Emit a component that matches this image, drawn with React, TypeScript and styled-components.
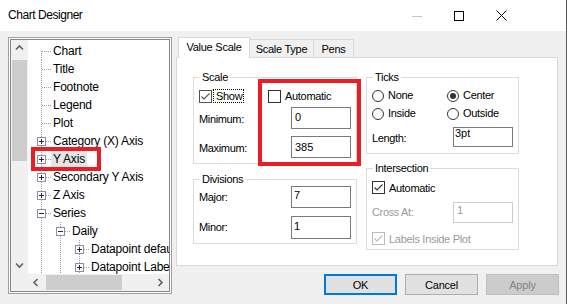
import React from "react";
import styled, { createGlobalStyle } from "styled-components";

const GlobalStyle = createGlobalStyle`
  html, body { margin: 0; padding: 0; background: #f0f0f0; }
  body { font-family: "Liberation Sans", Arial, sans-serif; color: #000; }
  * { box-sizing: border-box; }
`;

const Window = styled.div`
  position: relative;
  width: 567px;
  height: 304px;
  background: #f0f0f0;
  border-right: 1px solid #5a5a5a;
  display: flex;
  flex-direction: column;
  overflow: hidden;
`;

const TitleBar = styled.div`
  height: 31px;
  flex-shrink: 0;
  background: #fff;
  display: flex;
  align-items: center;
  padding: 0 44px 0 8px;
`;

const Caption = styled.div`
  flex: 1;
  font-size: 12px;
  letter-spacing: -0.45px;
  padding-bottom: 1px;
`;

const CaptionButton = styled.div`
  width: 42px;
  height: 31px;
  display: flex;
  align-items: center;
  justify-content: center;
`;

const Body = styled.div`
  display: flex;
  gap: 4px;
  padding: 6px 0 0 8px;
`;

/* ---------- tree ---------- */

const TreeFrame = styled.div`
  width: 164px;
  height: 257px;
  border: 1px solid #a0a0a0;
  padding: 1px;
  background: #fff;
`;

const TreeInner = styled.div`
  height: 100%;
  border: 1px solid #828790;
  display: grid;
  grid-template-columns: 17px 1fr;
  grid-template-rows: 1fr 17px;
  background: #fff;
`;

const VScroll = styled.div`
  background: #f0f0f0;
  display: flex;
  flex-direction: column;
  align-items: center;
`;

const HScroll = styled.div`
  background: #f0f0f0;
  display: flex;
  align-items: center;
`;

const Corner = styled.div`
  background: #f0f0f0;
`;

const ArrowButton = styled.div`
  width: 17px;
  height: 17px;
  flex-shrink: 0;
  display: flex;
  align-items: center;
  justify-content: center;
`;

const Track = styled.div<{ $vertical?: boolean }>`
  flex: 1;
  align-self: stretch;
  display: flex;
  flex-direction: ${(p) => (p.$vertical ? "column" : "row")};
  align-items: center;
`;

const Thumb = styled.div<{ $vertical?: boolean; $len: number; $start: number }>`
  background: #cdcdcd;
  ${(p) =>
    p.$vertical
      ? `width: 15px; height: ${p.$len}px; margin-top: ${p.$start}px;`
      : `height: 15px; width: ${p.$len}px; margin-left: ${p.$start}px;`}
`;

const TreeContent = styled.div`
  overflow: hidden;
  padding-top: 2px;
  background: #fff;
`;

const TreeRow = styled.div`
  height: 18px;
  display: flex;
  align-items: center;
  white-space: nowrap;
`;

const TreeLabel = styled.span<{ $selected?: boolean }>`
  font-size: 12px;
  letter-spacing: -0.2px;
  line-height: 16px;
  height: 16px;
  padding: 0 2px;
  background: ${(p) => (p.$selected ? "#e5e5e5" : "transparent")};
`;

type Item = { label: string; level: number; exp?: "+" | "-"; first?: boolean; selected?: boolean };

const treeItems: Item[] = [
  { label: "Chart", level: 0, first: true },
  { label: "Title", level: 0 },
  { label: "Footnote", level: 0 },
  { label: "Legend", level: 0 },
  { label: "Plot", level: 0 },
  { label: "Category (X) Axis", level: 0, exp: "+" },
  { label: "Y Axis", level: 0, exp: "+", selected: true },
  { label: "Secondary Y Axis", level: 0, exp: "+" },
  { label: "Z Axis", level: 0, exp: "+" },
  { label: "Series", level: 0, exp: "-" },
  { label: "Daily", level: 1, exp: "-" },
  { label: "Datapoint defaults", level: 2, exp: "+" },
  { label: "Datapoint Labels", level: 2, exp: "+" },
];

function TreeGlyph({ level, exp, first }: { level: number; exp?: "+" | "-"; first?: boolean }) {
  const w = 23 + 19 * level;
  const X = 13 + 19 * level;
  const dot = { stroke: "#a0a0a0", strokeDasharray: "1 1", strokeWidth: 1 };
  const guides = [];
  for (let k = 0; k < level; k++) {
    const x = 13 + 19 * k + 0.5;
    guides.push(<line key={k} x1={x} y1={0} x2={x} y2={18} {...dot} />);
  }
  return (
    <svg width={w} height={18} shapeRendering="crispEdges" style={{ flexShrink: 0 }}>
      {guides}
      <line x1={X + 0.5} y1={first ? 9 : 0} x2={X + 0.5} y2={18} {...dot} />
      <line x1={X + 1} y1={9.5} x2={X + 11} y2={9.5} {...dot} />
      {exp && (
        <g>
          <rect x={X - 3.5} y={5.5} width={8} height={8} fill="#fff" stroke="#8e8f9a" />
          <line x1={X - 2} y1={9.5} x2={X + 3} y2={9.5} stroke="#24244f" />
          {exp === "+" && <line x1={X + 0.5} y1={7} x2={X + 0.5} y2={12} stroke="#24244f" />}
        </g>
      )}
    </svg>
  );
}

const Chevron = ({ dir }: { dir: "up" | "down" | "left" | "right" }) => {
  const pts = {
    up: "1,5.5 4.5,2 8,5.5",
    down: "1,2.5 4.5,6 8,2.5",
    left: "5.5,1 2,4.5 5.5,8",
    right: "2.5,1 6,4.5 2.5,8",
  }[dir];
  return (
    <svg width={9} height={9}>
      <polyline points={pts} fill="none" stroke="#606060" strokeWidth={1.6} />
    </svg>
  );
};

/* ---------- tabs ---------- */

const RightColumn = styled.div`
  width: 383px;
  display: flex;
  flex-direction: column;
`;

const TabStrip = styled.div`
  display: flex;
  align-items: flex-end;
  height: 21px;
  margin-bottom: -1px;
  padding-left: 2px;
  position: relative;
  z-index: 1;
`;

const Tab = styled.div<{ $active?: boolean; $w: number }>`
  width: ${(p) => p.$w}px;
  height: ${(p) => (p.$active ? 21 : 19)}px;
  margin-left: ${(p) => (p.$active ? 0 : -1)}px;
  border: 1px solid #d9d9d9;
  border-bottom: ${(p) => (p.$active ? "none" : "1px solid #d9d9d9")};
  background: ${(p) => (p.$active ? "#fff" : "#f0f0f0")};
  font-size: 11px;
  letter-spacing: -0.25px;
  display: flex;
  justify-content: center;
  align-items: center;
  padding-bottom: ${(p) => (p.$active ? 3 : 0)}px;
  position: relative;
  z-index: ${(p) => (p.$active ? 2 : 1)};
`;

const Panel = styled.div`
  width: 382px;
  height: 209px;
  background: #fff;
  border: 1px solid #d9d9d9;
  display: flex;
  gap: 9px;
  padding: 13px 0 0 16px;
`;

const GroupColumn = styled.div<{ $gap: number }>`
  display: flex;
  flex-direction: column;
  gap: ${(p) => p.$gap}px;
`;

const Group = styled.fieldset<{ $w: number; $h: number; $pt: number }>`
  margin: 0;
  min-width: 0;
  width: ${(p) => p.$w}px;
  height: ${(p) => p.$h}px;
  border: 1px solid #dcdcdc;
  padding: ${(p) => p.$pt}px 5px 0 5px;
  display: flex;
  flex-direction: column;
`;

const Legend = styled.legend`
  font-size: 11px;
  letter-spacing: -0.3px;
  line-height: 13px;
  padding: 0 2px;
  margin-left: 1px;
`;

const Row = styled.div<{ $h: number; $mt?: number }>`
  display: flex;
  align-items: center;
  height: ${(p) => p.$h}px;
  margin-top: ${(p) => p.$mt ?? 0}px;
  flex-shrink: 0;
`;

const Slot = styled.div<{ $w: number }>`
  width: ${(p) => p.$w}px;
  flex-shrink: 0;
  display: flex;
  align-items: center;
`;

const Text = styled.span<{ $disabled?: boolean; $shift?: number }>`
  font-size: 11px;
  letter-spacing: -0.35px;
  line-height: 13px;
  color: ${(p) => (p.$disabled ? "#9a9a9a" : "#000")};
  margin-top: ${(p) => (p.$shift ?? 0) * 2}px;
`;

const TextBox = styled.div<{ $h: number; $pt: number; $pl?: number; $disabled?: boolean; $lh?: number }>`
  width: 60px;
  height: ${(p) => p.$h}px;
  margin-left: auto;
  border: 1px solid ${(p) => (p.$disabled ? "#cccccc" : "#7a7a7a")};
  background: #fff;
  font-size: 11px;
  line-height: ${(p) => p.$lh ?? 13}px;
  padding: ${(p) => p.$pt}px 0 0 ${(p) => p.$pl ?? 3}px;
  color: ${(p) => (p.$disabled ? "#9a9a9a" : "#000")};
`;

const CheckWrap = styled.span`
  display: flex;
  align-items: center;
  gap: 1px;
`;

const Box = styled.span<{ $disabled?: boolean; $tone?: string }>`
  width: 13px;
  height: 13px;
  flex-shrink: 0;
  border: 1px solid ${(p) => (p.$disabled ? "#bcbcbc" : p.$tone ?? "#333")};
  background: #fff;
  display: flex;
  align-items: center;
  justify-content: center;
`;

const CheckText = styled.span<{ $focus?: boolean; $disabled?: boolean }>`
  font-size: 11px;
  letter-spacing: -0.3px;
  line-height: 12px;
  padding: 0 1px 0 2px;
  border: 1px ${(p) => (p.$focus ? "dotted #000" : "solid transparent")};
  color: ${(p) => (p.$disabled ? "#9a9a9a" : "#000")};
`;

const Radio = styled.span<{ $on?: boolean }>`
  width: 12px;
  height: 12px;
  flex-shrink: 0;
  border: 1px solid #333;
  border-radius: 50%;
  background: #fff;
  display: flex;
  align-items: center;
  justify-content: center;
  &::after {
    content: "";
    width: 6px;
    height: 6px;
    border-radius: 50%;
    background: ${(p) => (p.$on ? "#333" : "transparent")};
  }
`;

const RadioText = styled.span`
  font-size: 11px;
  letter-spacing: -0.3px;
  line-height: 13px;
  margin-left: 3px;
`;

function Check({
  label,
  checked,
  disabled,
  focus,
  tone,
}: {
  label: string;
  checked?: boolean;
  disabled?: boolean;
  focus?: boolean;
  tone?: string;
}) {
  const c = disabled ? "#bcbcbc" : tone ?? "#333";
  return (
    <CheckWrap>
      <Box $disabled={disabled} $tone={tone}>
        {checked && (
          <svg width={11} height={11}>
            <polyline points="1.5,5.5 4,8 9.5,2.5" fill="none" stroke={c} strokeWidth={1.1} />
          </svg>
        )}
      </Box>
      <CheckText $focus={focus} $disabled={disabled}>
        {label}
      </CheckText>
    </CheckWrap>
  );
}

function RadioItem({ label, on }: { label: string; on?: boolean }) {
  return (
    <CheckWrap>
      <Radio $on={on} />
      <RadioText>{label}</RadioText>
    </CheckWrap>
  );
}

/* ---------- buttons ---------- */

const ButtonRow = styled.div`
  display: flex;
  justify-content: flex-end;
  gap: 8px;
  margin-top: 8px;
`;

const Button = styled.div<{ $variant?: "default" | "disabled" }>`
  width: 73px;
  height: 21px;
  display: flex;
  align-items: center;
  justify-content: center;
  font-size: 11px;
  letter-spacing: -0.2px;
  background: ${(p) => (p.$variant === "disabled" ? "#cccccc" : "#e1e1e1")};
  color: ${(p) => (p.$variant === "disabled" ? "#838383" : "#000")};
  border: ${(p) =>
    p.$variant === "default"
      ? "2px solid #0078d7"
      : p.$variant === "disabled"
      ? "1px solid #bfbfbf"
      : "1px solid #adadad"};
`;

/* ---------- annotation ---------- */

const Callout = styled.div<{ $x: number; $y: number; $w: number; $h: number }>`
  position: absolute;
  left: ${(p) => p.$x}px;
  top: ${(p) => p.$y}px;
  width: ${(p) => p.$w}px;
  height: ${(p) => p.$h}px;
  border: 4px solid #ec1c24;
  pointer-events: none;
`;

export default function App() {
  return (
    <>
      <GlobalStyle />
      <Window>
        <TitleBar>
          <Caption>Chart Designer</Caption>
          <CaptionButton>
            <svg width={10} height={10} shapeRendering="crispEdges">
              <line x1={0} y1={5.5} x2={10} y2={5.5} stroke="#c4c4c4" />
            </svg>
          </CaptionButton>
          <CaptionButton>
            <svg width={10} height={10} shapeRendering="crispEdges">
              <rect x={0.5} y={0.5} width={9} height={9} fill="none" stroke="#000" />
            </svg>
          </CaptionButton>
          <CaptionButton>
            <svg width={11} height={11}>
              <path d="M0.5 0.5 L10.5 10.5 M10.5 0.5 L0.5 10.5" stroke="#000" strokeWidth={1} />
            </svg>
          </CaptionButton>
        </TitleBar>
        <Body>
          <TreeFrame>
            <TreeInner>
              <VScroll>
                <ArrowButton>
                  <Chevron dir="up" />
                </ArrowButton>
                <Track $vertical>
                  <Thumb $vertical $len={101} $start={3} />
                </Track>
                <ArrowButton>
                  <Chevron dir="down" />
                </ArrowButton>
              </VScroll>
              <TreeContent>
                {treeItems.map((it) => (
                  <TreeRow key={it.label}>
                    <TreeGlyph level={it.level} exp={it.exp} first={it.first} />
                    <TreeLabel $selected={it.selected}>{it.label}</TreeLabel>
                  </TreeRow>
                ))}
              </TreeContent>
              <Corner />
              <HScroll>
                <ArrowButton>
                  <Chevron dir="left" />
                </ArrowButton>
                <Track>
                  <Thumb $len={76} $start={1} />
                </Track>
                <ArrowButton>
                  <Chevron dir="right" />
                </ArrowButton>
              </HScroll>
            </TreeInner>
          </TreeFrame>

          <RightColumn>
            <TabStrip>
              <Tab $active $w={72}>
                Value Scale
              </Tab>
              <Tab $w={65}>Scale Type</Tab>
              <Tab $w={41}>Pens</Tab>
            </TabStrip>
            <Panel>
              <GroupColumn $gap={9}>
                <Group $w={164} $h={93} $pt={5}>
                  <Legend>Scale</Legend>
                  <Row $h={14}>
                    <Slot $w={69}>
                      <Check label="Show" checked focus tone="#555" />
                    </Slot>
                    <Check label="Automatic" />
                  </Row>
                  <Row $h={22} $mt={4}>
                    <Text $shift={1}>Minimum:</Text>
                    <TextBox $h={22} $pt={3}>
                      0
                    </TextBox>
                  </Row>
                  <Row $h={22} $mt={7}>
                    <Text $shift={1}>Maximum:</Text>
                    <TextBox $h={22} $pt={4}>
                      385
                    </TextBox>
                  </Row>
                </Group>
                <Group $w={164} $h={71} $pt={0}>
                  <Legend>Divisions</Legend>
                  <Row $h={22}>
                    <Text>Major:</Text>
                    <TextBox $h={22} $pt={2} $pl={2}>
                      7
                    </TextBox>
                  </Row>
                  <Row $h={23} $mt={8}>
                    <Text>Minor:</Text>
                    <TextBox $h={23} $pt={3} $pl={2}>
                      1
                    </TextBox>
                  </Row>
                </Group>
              </GroupColumn>
              <GroupColumn $gap={8}>
                <Group $w={153} $h={83} $pt={5}>
                  <Legend>Ticks</Legend>
                  <Row $h={13}>
                    <Slot $w={75}>
                      <RadioItem label="None" />
                    </Slot>
                    <RadioItem label="Center" on />
                  </Row>
                  <Row $h={13} $mt={5}>
                    <Slot $w={75}>
                      <RadioItem label="Inside" />
                    </Slot>
                    <RadioItem label="Outside" />
                  </Row>
                  <Row $h={20} $mt={7}>
                    <Text $shift={1.5}>Length:</Text>
                    <TextBox $h={20} $pt={0} $pl={1} $lh={11}>
                      3pt
                    </TextBox>
                  </Row>
                </Group>
                <Group $w={153} $h={88} $pt={6}>
                  <Legend>Intersection</Legend>
                  <Row $h={13}>
                    <Check label="Automatic" checked />
                  </Row>
                  <Row $h={21} $mt={8}>
                    <Text $disabled>Cross At:</Text>
                    <TextBox $h={21} $pt={1} $disabled>
                      1
                    </TextBox>
                  </Row>
                  <Row $h={13} $mt={9}>
                    <Check label="Labels Inside Plot" checked disabled />
                  </Row>
                </Group>
              </GroupColumn>
            </Panel>
            <ButtonRow>
              <Button $variant="default">OK</Button>
              <Button>Cancel</Button>
              <Button $variant="disabled">Apply</Button>
            </ButtonRow>
          </RightColumn>
        </Body>
        <Callout $x={31} $y={147} $w={70} $h={24} />
        <Callout $x={258} $y={79} $w={103} $h={87} />
      </Window>
    </>
  );
}
